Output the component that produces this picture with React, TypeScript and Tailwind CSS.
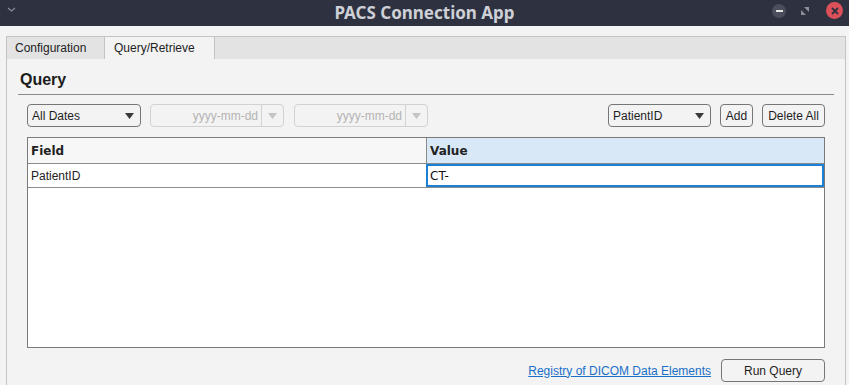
import React from "react";

const sans = { fontFamily: '"Liberation Sans", Arial, sans-serif' };
const deja = { fontFamily: '"DejaVu Sans", sans-serif' };
const noto = { fontFamily: '"Noto Sans", sans-serif' };

const Caret = ({ color = "#3a3a3a" }: { color?: string }) => (
  <svg width="9" height="6" viewBox="0 0 9 6">
    <path d="M0 0 L9 0 L4.5 6 Z" fill={color} />
  </svg>
);

const SelectBox = ({ label, width }: { label: string; width: string }) => (
  <div
    className={`flex h-[23px] items-center justify-between rounded-[4px] border border-[#767676] bg-[#f3f3f3] pl-[4px] pr-[6px] text-[12px] text-[#1e1e1e] ${width}`}
  >
    <span>{label}</span>
    <Caret />
  </div>
);

const DateBox = () => (
  <div className="flex h-[23px] w-[134px] items-center rounded-[4px] border border-[#d2d2d2] text-[12px] text-[#b4b4b4]">
    <span className="flex-1 pr-[3px] text-right">yyyy-mm-dd</span>
    <div className="flex h-full w-[22px] items-center justify-center border-l border-[#d2d2d2]">
      <Caret color="#c4c4c4" />
    </div>
  </div>
);

const Button = ({ label, width }: { label: string; width: string }) => (
  <div
    className={`flex h-[23px] items-center justify-center rounded-[4px] border border-[#767676] bg-[#f3f3f3] text-[12px] text-[#1e1e1e] ${width}`}
  >
    {label}
  </div>
);

const TitleBar = () => (
  <div className="relative flex h-[26px] items-center justify-center bg-[#2e3140]">
    <svg className="absolute left-[7px] top-[6px]" width="9" height="7" viewBox="0 0 9 7">
      <path d="M1 2 L4.5 5 L8 2" stroke="#8a8d96" strokeWidth="1.3" fill="none" />
    </svg>
    <span className="text-[17px] font-bold leading-[20px] text-[#cdd0d6]" style={noto}>
      PACS Connection App
    </span>
    <div className="absolute right-[6px] top-[2px] flex items-center">
      <div className="flex h-[14px] w-[14px] items-center justify-center rounded-full bg-[#4b4f5c]">
        <div className="h-[2px] w-[7px] bg-[#e2e2e2]" />
      </div>
      <svg className="ml-[14px]" width="10" height="10" viewBox="0 0 10 10">
        <path d="M4 1 L9 1 L9 6 Z" fill="#8c8f97" />
        <path d="M1 4 L1 9 L6 9 Z" fill="#8c8f97" />
      </svg>
      <div className="ml-[16px] flex h-[17px] w-[17px] items-center justify-center rounded-full bg-[#dc505a]">
        <svg width="8" height="8" viewBox="0 0 8 8">
          <path d="M1 1 L7 7 M7 1 L1 7" stroke="#2e3140" strokeWidth="1.8" />
        </svg>
      </div>
    </div>
  </div>
);

export default function App() {
  return (
    <div className="flex h-[385px] w-[849px] flex-col overflow-hidden bg-[#f3f3f3]" style={sans}>
      <TitleBar />
      <div className="flex flex-1 flex-col pl-[6px] pr-[3px] pt-[10px]">
        <div className="flex h-[23px] text-[12px] text-[#222]">
          <div className="flex w-[99px] items-center border border-b-0 border-[#c4c4c4] bg-[#e3e3e3] pl-[8px]">
            Configuration
          </div>
          <div className="flex w-[109px] items-center border-t border-[#c4c4c4] bg-[#f3f3f3] pl-[9px]">
            Query/Retrieve
          </div>
          <div className="flex-1 border border-b-0 border-[#c4c4c4] bg-[#e3e3e3]" />
        </div>
        <div className="flex flex-1 flex-col border-x border-[#c4c4c4] px-[10px]">
          <div className="mx-[1px] mt-[11px] border-b border-[#8a8a8a] pb-[4px] pl-[2px]">
            <div className="h-[20px] text-[16px] font-bold leading-[20px] text-[#1c1c1c]">Query</div>
          </div>
          <div className="flex flex-1 flex-col px-[10px]">
            <div className="mt-[9px] flex items-center">
              <SelectBox label="All Dates" width="w-[114px]" />
              <div className="ml-[9px]">
                <DateBox />
              </div>
              <div className="ml-[10px]">
                <DateBox />
              </div>
              <div className="flex-1" />
              <SelectBox label="PatientID" width="w-[103px]" />
              <div className="ml-[9px]">
                <Button label="Add" width="w-[33px]" />
              </div>
              <div className="ml-[9px]">
                <Button label="Delete All" width="w-[63px]" />
              </div>
            </div>
            <div className="mt-[10px] flex h-[211px] flex-col border border-[#7a7a7a] bg-white text-[12px]">
              <div className="grid h-[26px] grid-cols-[398px_1fr] border-b border-[#8c8c8c]">
                <div className="flex items-center bg-[#f7f7f7] pl-[3px] font-bold text-[#222]" style={deja}>
                  Field
                </div>
                <div
                  className="flex items-center border-l border-[#8c8c8c] bg-[#d8e8f7] pl-[3px] font-bold text-[#222]"
                  style={deja}
                >
                  Value
                </div>
              </div>
              <div className="grid h-[24px] grid-cols-[398px_1fr] border-b border-[#8c8c8c]">
                <div className="flex items-center pl-[3px] text-[#222]">PatientID</div>
                <div
                  className="flex items-center border-2 border-[#1c7fd6] pl-[2px] text-[#111]"
                  style={deja}
                >
                  CT-
                </div>
              </div>
            </div>
            <div className="mt-[11px] flex items-center justify-end">
              <span className="text-[12px] text-[#1a6fc8] underline">Registry of DICOM Data Elements</span>
              <div className="ml-[10px]">
                <Button label="Run Query" width="w-[104px]" />
              </div>
            </div>
          </div>
        </div>
      </div>
    </div>
  );
}
